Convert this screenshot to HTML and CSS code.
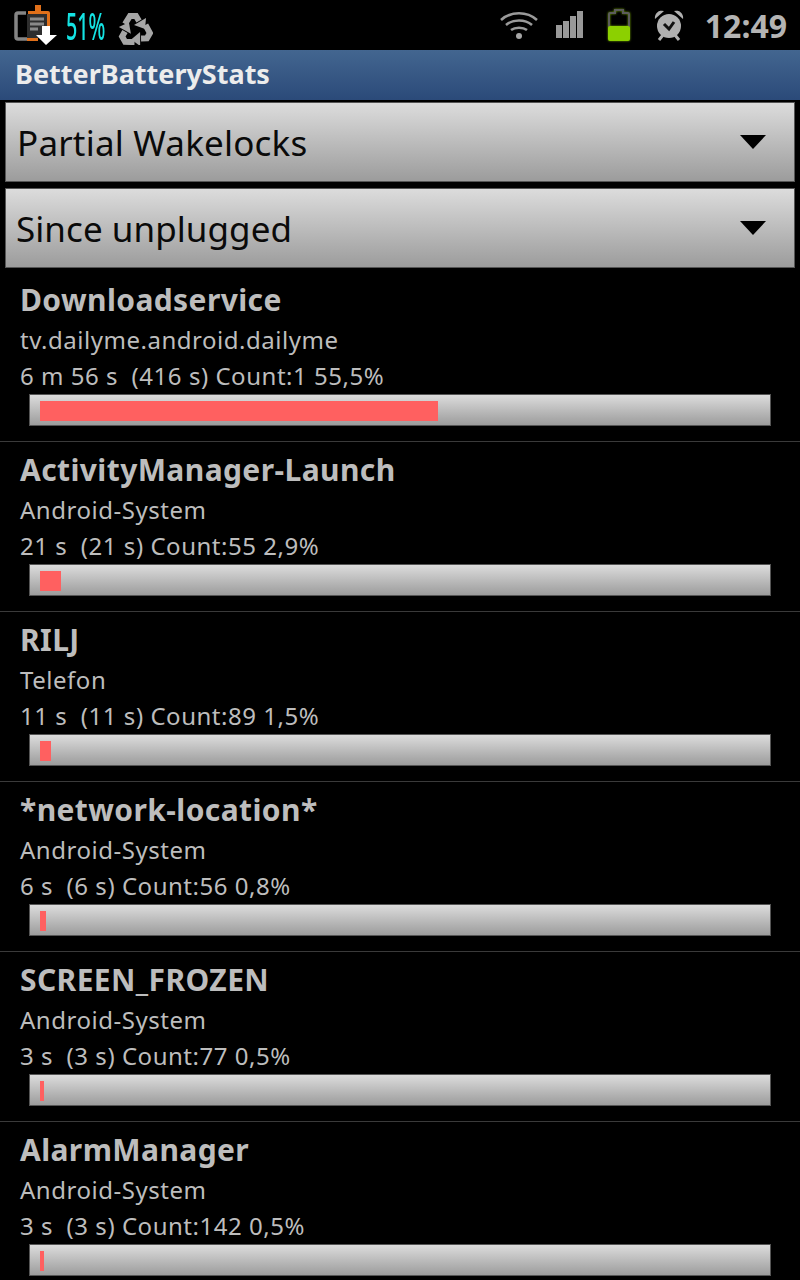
FILE: index.html
```html
<!DOCTYPE html>
<html lang="en">
<head>
  <meta charset="UTF-8">
  <meta name="viewport" content="width=device-width, initial-scale=1.0">
  <title>BetterBatteryStats</title>
  <link rel="stylesheet" href="styles.css">
</head>
<body>

  <div class="status-bar">
    <div class="status-left">
      <svg width="44" height="42" viewBox="0 0 44 42">
        <path d="M12 9H4a2 2 0 0 0-2 2v22a2 2 0 0 0 2 2h10" fill="none" stroke="#858585" stroke-width="3.500"/>
        <path d="M14 7h7V1h6v6h7a2 2 0 0 1 2 2v16H24v12H13v-3h3V10h-2z" fill="#e0701a"/>
        <rect x="13" y="10" width="20" height="24" fill="#2e2e2e"/>
        <path d="M16 15h14M16 20h14M16 25h8" stroke="#8a8a8a" stroke-width="3"/>
        <path d="M28 22h8v9h7L32 41 22 31h6z" fill="#fff"/>
      </svg>
      <span class="batt-pct">51%</span>
      <svg class="ic-recycle" width="36" height="34" viewBox="0 0 36 34" fill="#a6a6a6">
        <g id="arm">
          <path d="M8 13l5-8h6l3 5" fill="none" stroke="#a6a6a6" stroke-width="6"/>
          <path d="M29 7L17 14 28 18z"/>
        </g>
        <use href="#arm" transform="rotate(120 18 19.300)"/>
        <use href="#arm" transform="rotate(240 18 19.300)"/>
      </svg>
    </div>
    <div class="status-right">
      <svg width="38" height="30" viewBox="0 0 38 30" fill="none" stroke="#9a9a9a" stroke-width="2.600">
        <path d="M1 10C11 1 27 1 37 10"/>
        <path d="M6 15c7-6 19-6 26 0"/>
        <path d="M11 20c4-3 12-3 16 0"/>
        <circle cx="19" cy="26" r="3" fill="#a6a6a6" stroke="none"/>
      </svg>
      <svg class="ic-signal" width="28" height="28" viewBox="0 0 28 28" fill="#999">
        <rect x="0" y="14" width="6" height="13"/>
        <rect x="7" y="10" width="6" height="17"/>
        <rect x="14" y="5" width="6" height="22"/>
        <rect x="21" y="0" width="6" height="27"/>
      </svg>
      <svg class="ic-battery" width="26" height="32" viewBox="0 0 26 32">
        <path d="M9 1h8v3h5a1 1 0 0 1 1 1v14H3V5a1 1 0 0 1 1-1h5z" fill="none" stroke="#5c5c5c" stroke-width="2"/>
        <rect x="2" y="17" width="22" height="15" rx="2" fill="#8cd000"/>
      </svg>
      <svg class="ic-alarm" width="30" height="32" viewBox="0 0 30 32">
        <path d="M1 10a7 7 0 0 1 9-8zM29 10a7 7 0 0 0-9-8z" fill="#b0b0b0"/>
        <circle cx="15" cy="17" r="12" fill="#b0b0b0"/>
        <path d="M5 31l4-5M25 31l-4-5" stroke="#b0b0b0" stroke-width="3"/>
        <path d="M10 15l5 5 5-7" fill="none" stroke="#111" stroke-width="3"/>
      </svg>
      <span class="clock">12:49</span>
    </div>
  </div>

  <div class="title-bar">BetterBatteryStats</div>

  <div class="spinner first">
    <span>Partial Wakelocks</span>
    <svg width="26" height="14" viewBox="0 0 26 14"><path d="M0 0h26L13 14z" fill="#000"/></svg>
  </div>
  <div class="spinner second">
    <span>Since unplugged</span>
    <svg width="26" height="14" viewBox="0 0 26 14"><path d="M0 0h26L13 14z" fill="#000"/></svg>
  </div>

  <div class="list">
    <div class="row">
      <div class="row-name">Downloadservice</div>
      <div class="row-sub">tv.dailyme.android.dailyme</div>
      <div class="row-sub">6 m 56 s&nbsp; (416 s) Count:1 55,5%</div>
      <div class="bar"><div class="bar-fill" style="width: 55.5%"></div></div>
    </div>
    <div class="row">
      <div class="row-name">ActivityManager-Launch</div>
      <div class="row-sub">Android-System</div>
      <div class="row-sub">21 s&nbsp; (21 s) Count:55 2,9%</div>
      <div class="bar"><div class="bar-fill" style="width: 2.9%"></div></div>
    </div>
    <div class="row">
      <div class="row-name">RILJ</div>
      <div class="row-sub">Telefon</div>
      <div class="row-sub">11 s&nbsp; (11 s) Count:89 1,5%</div>
      <div class="bar"><div class="bar-fill" style="width: 1.5%"></div></div>
    </div>
    <div class="row">
      <div class="row-name">*network-location*</div>
      <div class="row-sub">Android-System</div>
      <div class="row-sub">6 s&nbsp; (6 s) Count:56 0,8%</div>
      <div class="bar"><div class="bar-fill" style="width: 0.8%"></div></div>
    </div>
    <div class="row">
      <div class="row-name">SCREEN_FROZEN</div>
      <div class="row-sub">Android-System</div>
      <div class="row-sub">3 s&nbsp; (3 s) Count:77 0,5%</div>
      <div class="bar"><div class="bar-fill" style="width: 0.5%"></div></div>
    </div>
    <div class="row">
      <div class="row-name">AlarmManager</div>
      <div class="row-sub">Android-System</div>
      <div class="row-sub">3 s&nbsp; (3 s) Count:142 0,5%</div>
      <div class="bar"><div class="bar-fill" style="width: 0.5%"></div></div>
    </div>
  </div>

</body>
</html>
```

FILE: styles.css
```css
html, body {
  height: 1280px;
  overflow: hidden;
}

body {
  margin: 0;
  background-color: #000;
  font-family: 'Noto Sans', 'Open Sans', sans-serif;
  color: #bdbdbd;
}

.status-bar {
  display: flex;
  justify-content: space-between;
  align-items: center;
  height: 50px;
  padding: 0 13px 0 14px;
  box-sizing: border-box;
}

.status-left, .status-right {
  display: flex;
  align-items: center;
}

.batt-pct {
  margin: 0 11px 0 8px;
  width: 40px;
  font-size: 38px;
  font-weight: 500;
  line-height: 50px;
  color: #14e3e3;
  transform: scaleX(0.52);
  transform-origin: left center;
}

.ic-recycle { margin-top: 5px; }
.ic-signal { margin-left: 18px; }
.ic-battery { margin-left: 22px; filter: drop-shadow(0 0 1px #6f9f00); }
.ic-alarm { margin-left: 22px; }

.clock {
  margin-left: 21px;
  font-size: 32px;
  font-weight: 700;
  color: #b4b4b4;
}

.title-bar {
  height: 50px;
  padding-left: 15px;
  box-sizing: border-box;
  background: linear-gradient(#436690, #2b4a79);
  color: #ececec;
  font-size: 27px;
  font-weight: 700;
  line-height: 48px;
}

.spinner {
  display: flex;
  justify-content: space-between;
  align-items: center;
  height: 80px;
  margin: 2px 5px 0;
  padding: 0 28px 0 11px;
  box-sizing: border-box;
  border: 1px solid #555;
  background: linear-gradient(#dcdcdc, #9c9c9c);
  color: #0a0a0a;
  font-size: 35px;
  letter-spacing: 0.2px;
}

.spinner.second {
  margin-top: 6px;
  padding-left: 10px;
  letter-spacing: 0.05px;
}

.list {
  margin-top: 4px;
}

.row {
  height: 170px;
  padding: 6px 20px 0;
  box-sizing: border-box;
  border-bottom: 1px solid #3a3a3a;
}

.row-name {
  font-size: 30px;
  font-weight: 700;
  line-height: 44px;
  letter-spacing: 0.4px;
}

.row-sub {
  font-size: 24px;
  line-height: 36px;
  letter-spacing: 0.53px;
}

.bar {
  margin: 0 9px;
  height: 32px;
  padding: 6px 13px 4px 10px;
  box-sizing: border-box;
  border: 1px solid #555;
  background: linear-gradient(#dcdcdc, #9c9c9c);
}

.bar-fill {
  height: 100%;
  background-color: #ff6060;
}
```
